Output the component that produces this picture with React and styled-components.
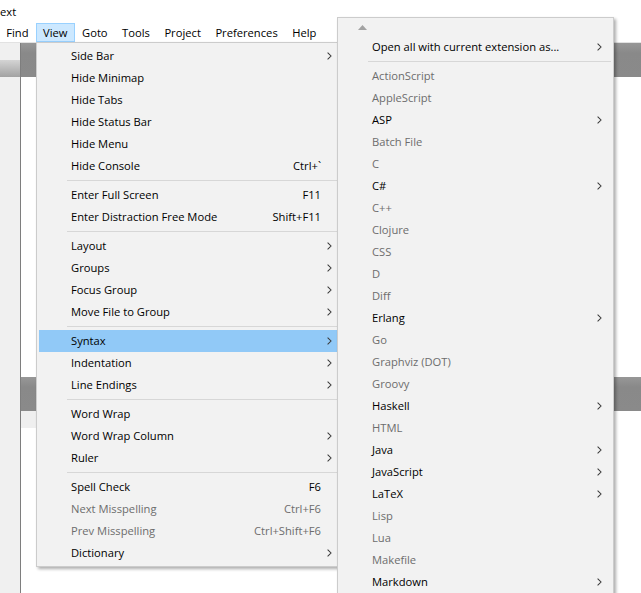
import React from 'react'
import styled, { createGlobalStyle } from 'styled-components'

const GlobalStyle = createGlobalStyle`
  html, body {
    margin: 0;
    padding: 0;
    background: #fff;
  }
  body {
    font-family: 'Open Sans', 'Noto Sans', sans-serif;
    font-size: 11.2px;
    color: #000;
  }
`

const Page = styled.div`
  position: relative;
  width: 641px;
  height: 593px;
  overflow: hidden;
  display: flex;
  flex-direction: column;
  background: #fff;
`

const TitleBar = styled.div`
  height: 22px;
  line-height: 23px;
`

const MenuBar = styled.div`
  display: flex;
  height: 20px;
  margin-left: -1px;
  border-bottom: 1px solid #e2e2e2;
`

const MenuBarItem = styled.div`
  padding: 0 6.25px;
  margin-top: 1px;
  line-height: 18px;
  border: 1px solid ${p => (p.$open ? '#99d1ff' : 'transparent')};
  background: ${p => (p.$open ? '#cce8ff' : 'transparent')};
`

const Workspace = styled.div`
  flex: 1;
  display: flex;
  min-height: 0;
`

const Sidebar = styled.div`
  width: 20px;
  background: #f0f0f0;
  border-right: 1px solid #7e7e7e;
  display: flex;
  flex-direction: column;
`

const SidebarHeader = styled.div`
  margin-top: 17px;
  height: 17px;
  background: linear-gradient(#d4d4d4, #a2a2a2);
`

const EditorColumn = styled.div`
  flex: 1;
  display: flex;
  flex-direction: column;
`

const TabBar = styled.div`
  height: 34px;
  background: linear-gradient(#979797, #898989 30%, #8a8a8a);
`

const EditorBody = styled.div`
  height: ${p => p.$height || 'auto'};
  flex: ${p => (p.$height ? 'none' : 1)};
  background: #fff;
`

const Gutter = styled.div`
  width: 44px;
  height: 17px;
  background: #efefef;
`

const Menu = styled.div`
  position: absolute;
  left: ${p => p.$left}px;
  top: ${p => p.$top}px;
  width: ${p => p.$width}px;
  box-sizing: border-box;
  padding: 2px 0;
  background: #f2f2f2;
  border: 1px solid #cccccc;
  box-shadow: 2px 2px 3px rgba(0, 0, 0, 0.32);
  z-index: ${p => p.$z || 1};
`

const ScrollUp = styled.div`
  height: 18px;
  margin-top: -2px;
  padding-left: 20px;
  display: flex;
  align-items: center;
`

const Item = styled.div`
  display: grid;
  grid-template-columns: 1fr auto 16px;
  align-items: center;
  box-sizing: border-box;
  height: 22px;
  margin: 0 2px;
  padding: 0 4px 2px 32px;
  white-space: nowrap;
  color: ${p => (p.$disabled ? '#6d6d6d' : '#000')};
  background: ${p => (p.$active ? '#91c9f7' : 'transparent')};
`

const Shortcut = styled.span`
  text-align: right;
`

const ArrowCell = styled.span`
  display: flex;
  justify-content: center;
  align-items: center;
  padding-top: 2px;
`

const Separator = styled.div`
  height: 1px;
  margin: 3px 2px 3px 30px;
  background: #d7d7d7;
`

const Chevron = () => (
  <svg width="5" height="8" viewBox="0 0 5 8">
    <path d="M0.6 0.6 L4 4 L0.6 7.4" fill="none" stroke="#3a3a3a" strokeWidth="1.05" />
  </svg>
)

const UpTriangle = () => (
  <svg width="9" height="5" viewBox="0 0 9 5">
    <polygon points="0,5 4.5,0 9,5" fill="#a3a3a3" />
  </svg>
)

const viewMenu = [
  { label: 'Side Bar', sub: true },
  { label: 'Hide Minimap' },
  { label: 'Hide Tabs' },
  { label: 'Hide Status Bar' },
  { label: 'Hide Menu' },
  { label: 'Hide Console', shortcut: 'Ctrl+`' },
  '-',
  { label: 'Enter Full Screen', shortcut: 'F11' },
  { label: 'Enter Distraction Free Mode', shortcut: 'Shift+F11' },
  '-',
  { label: 'Layout', sub: true },
  { label: 'Groups', sub: true },
  { label: 'Focus Group', sub: true },
  { label: 'Move File to Group', sub: true },
  '-',
  { label: 'Syntax', sub: true, active: true },
  { label: 'Indentation', sub: true },
  { label: 'Line Endings', sub: true },
  '-',
  { label: 'Word Wrap' },
  { label: 'Word Wrap Column', sub: true },
  { label: 'Ruler', sub: true },
  '-',
  { label: 'Spell Check', shortcut: 'F6' },
  { label: 'Next Misspelling', shortcut: 'Ctrl+F6', disabled: true },
  { label: 'Prev Misspelling', shortcut: 'Ctrl+Shift+F6', disabled: true },
  { label: 'Dictionary', sub: true },
]

// syntaxes with a sub menu are the enabled ones
const syntaxes = [
  ['ActionScript'],
  ['AppleScript'],
  ['ASP', true],
  ['Batch File'],
  ['C'],
  ['C#', true],
  ['C++'],
  ['Clojure'],
  ['CSS'],
  ['D'],
  ['Diff'],
  ['Erlang', true],
  ['Go'],
  ['Graphviz (DOT)'],
  ['Groovy'],
  ['Haskell', true],
  ['HTML'],
  ['Java', true],
  ['JavaScript', true],
  ['LaTeX', true],
  ['Lisp'],
  ['Lua'],
  ['Makefile'],
  ['Markdown', true],
]

const MenuRow = ({ label, shortcut, sub, active, disabled }) => (
  <Item $active={active} $disabled={disabled}>
    <span>{label}</span>
    <Shortcut>{shortcut}</Shortcut>
    <ArrowCell>{sub && <Chevron />}</ArrowCell>
  </Item>
)

const topMenus = ['Find', 'View', 'Goto', 'Tools', 'Project', 'Preferences', 'Help']

const App = () => (
  <Page>
    <GlobalStyle />
    <TitleBar>ext</TitleBar>
    <MenuBar>
      {topMenus.map(m => (
        <MenuBarItem key={m} $open={m === 'View'}>
          {m}
        </MenuBarItem>
      ))}
    </MenuBar>
    <Workspace>
      <Sidebar>
        <SidebarHeader />
      </Sidebar>
      <EditorColumn>
        <TabBar />
        <EditorBody $height="300px" />
        <TabBar />
        <EditorBody>
          <Gutter />
        </EditorBody>
      </EditorColumn>
    </Workspace>

    <Menu $left={36} $top={42} $width={308}>
      {viewMenu.map((it, i) =>
        it === '-' ? <Separator key={i} /> : <MenuRow key={i} {...it} />
      )}
    </Menu>

    <Menu $left={337} $top={17} $width={277} $z={2}>
      <ScrollUp>
        <UpTriangle />
      </ScrollUp>
      <MenuRow label="Open all with current extension as..." sub />
      <Separator />
      {syntaxes.map(([name, enabled]) => (
        <MenuRow key={name} label={name} sub={enabled} disabled={!enabled} />
      ))}
    </Menu>
  </Page>
)

export default App
